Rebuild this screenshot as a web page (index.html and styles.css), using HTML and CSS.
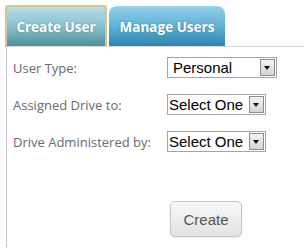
FILE: index.html
```html
<!DOCTYPE html>
<html lang="en">
<head>
    <meta charset="UTF-8">
    <title>Users</title>
    <link rel="stylesheet" href="styles.css">
</head>
<body>

    <div class="tabs">
        <div class="tab tab-active">Create User</div>
        <div class="tab">Manage Users</div>
    </div>

    <div class="panel">
        <div class="form-row">
            <label>User Type:</label>
            <div class="select select-wide">
                <span class="select-value">Personal</span>
                <span class="select-arrow"></span>
            </div>
        </div>
        <div class="form-row">
            <label>Assigned Drive to:</label>
            <div class="select">
                <span class="select-value">Select One</span>
                <span class="select-arrow"></span>
            </div>
        </div>
        <div class="form-row">
            <label>Drive Administered by:</label>
            <div class="select">
                <span class="select-value">Select One</span>
                <span class="select-arrow"></span>
            </div>
        </div>

        <div class="actions">
            <button class="create-btn">Create</button>
        </div>
    </div>

</body>
</html>
```

FILE: styles.css
```css
body {
    margin: 0;
    padding: 5px 0 0 5px;
    background: white;
    font-family: 'Open Sans', sans-serif;
    height: 247px;
    box-sizing: border-box;
    display: flex;
    flex-direction: column;
}

/* Tabs */
.tabs {
    display: flex;
    align-items: flex-end;
    gap: 2px;
}

.tab {
    width: 116px;
    height: 41px;
    box-sizing: border-box;
    display: flex;
    align-items: center;
    justify-content: center;
    color: white;
    font-weight: bold;
    font-size: 13.5px;
    border-radius: 8px 8px 0 0;
    background: linear-gradient(#93d2ec, #5fb0d4 50%, #2b82ad);
    text-shadow: 0 0 2px rgba(0, 0, 0, 0.25);
}

.tab-active {
    width: 102px;
    height: 42px;
    border: 2px solid #d8c68f;
    border-bottom: none;
    border-radius: 3px 3px 0 0;
    background: linear-gradient(#b6dfe8, #86bfcc 50%, #4d8d9c);
}

/* Panel */
.panel {
    flex: 1;
    margin-left: 1px;
    border-left: 1px solid #c8c8c8;
    border-top: 1px solid #d8d8d8;
    margin-top: -1px;
    padding: 10px 0 0 6px;
}

.form-row {
    display: flex;
    align-items: center;
    height: 21px;
    margin-bottom: 16px;
}

.form-row label {
    width: 154px;
    color: #6a6a6a;
    font-size: 13px;
}

.select {
    width: 99px;
    height: 21px;
    box-sizing: border-box;
    border: 1px solid #a5a5a5;
    display: flex;
    align-items: center;
    justify-content: space-between;
    font-family: 'Liberation Sans', Arial, sans-serif;
    font-size: 15px;
    color: black;
}

.select-wide {
    width: 110px;
}

.select-value {
    padding-left: 1px;
    white-space: nowrap;
}

.select-wide .select-value {
    padding-left: 5px;
}

.select-arrow {
    width: 15px;
    height: 17px;
    margin-right: 1px;
    box-sizing: border-box;
    border: 1px solid #8c8c8c;
    background: linear-gradient(#f4f4f4, #d4d4d4);
    position: relative;
}

.select-arrow::after {
    content: "";
    position: absolute;
    left: 3px;
    top: 6px;
    border-left: 3.5px solid transparent;
    border-right: 3.5px solid transparent;
    border-top: 4px solid #111;
}

.actions {
    padding: 33px 0 0 157px;
}

.create-btn {
    width: 72px;
    height: 36px;
    border: 1px solid #c4c4c4;
    border-radius: 5px;
    background: linear-gradient(#f8f8f8, #e2e2e2);
    color: #555;
    font-family: 'Liberation Sans', Arial, sans-serif;
    font-size: 15px;
    box-shadow: 0 1px 2px rgba(0, 0, 0, 0.1);
}
```
